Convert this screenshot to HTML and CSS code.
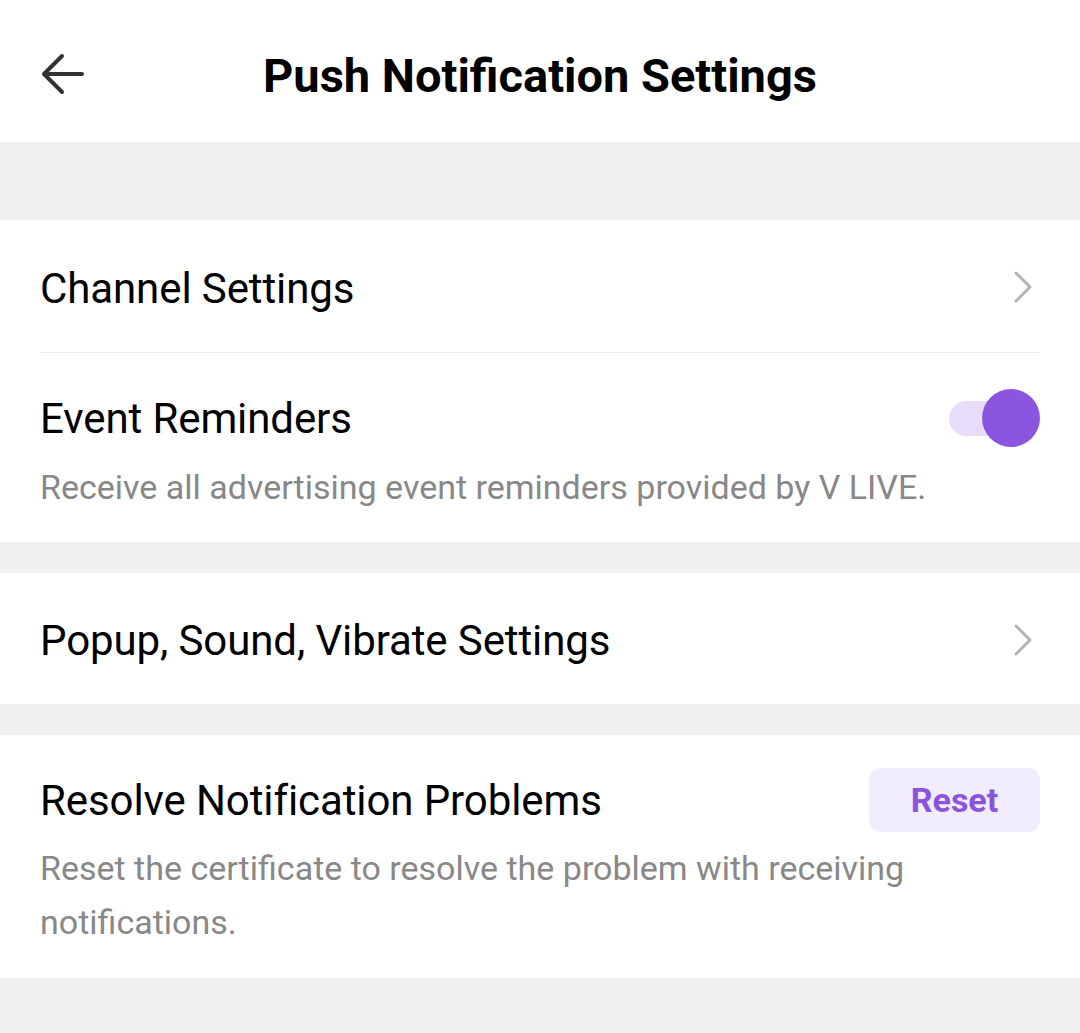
FILE: index.html
```html
<!DOCTYPE html>
<html>
<head>
<meta charset="utf-8">
<link rel="stylesheet" href="styles.css">
</head>
<body>
<div class="page">
  <header class="header">
    <button class="back" aria-label="Back">
      <svg width="48" height="48" viewBox="0 0 48 48"><path d="M43 24H5M23 6L5 24l18 18" fill="none" stroke="#333" stroke-width="4" stroke-linecap="round" stroke-linejoin="round"/></svg>
    </button>
    <h1 class="title">Push Notification Settings</h1>
  </header>
  <div class="gap gap-top"></div>
  <section class="group">
    <div class="row row-link">
      <span class="label">Channel Settings</span>
      <svg class="chev" width="20" height="32" viewBox="0 0 20 32"><path d="M3 2l14 14L3 30" fill="none" stroke="#b3b3b3" stroke-width="3" stroke-linecap="round" stroke-linejoin="round"/></svg>
    </div>
    <div class="divider"></div>
    <div class="row-block">
      <div class="row-head">
        <span class="label">Event Reminders</span>
        <span class="toggle"><span class="track"></span><span class="thumb"></span></span>
      </div>
      <p class="desc">Receive all advertising event reminders provided by V LIVE.</p>
    </div>
  </section>
  <div class="gap gap-small"></div>
  <section class="group">
    <div class="row row-link row-popup">
      <span class="label">Popup, Sound, Vibrate Settings</span>
      <svg class="chev" width="20" height="32" viewBox="0 0 20 32"><path d="M3 2l14 14L3 30" fill="none" stroke="#b3b3b3" stroke-width="3" stroke-linecap="round" stroke-linejoin="round"/></svg>
    </div>
  </section>
  <div class="gap gap-small"></div>
  <section class="group">
    <div class="row-block resolve">
      <div class="row-head">
        <span class="label">Resolve Notification Problems</span>
        <button class="reset">Reset</button>
      </div>
      <p class="desc">Reset the certificate to resolve the problem with receiving notifications.</p>
    </div>
  </section>
  <div class="gap gap-bottom"></div>
</div>
</body>
</html>
```

FILE: styles.css
```css
html, body {
  margin: 0;
  padding: 0;
  background: #f0f0f2;
}
body {
  font-family: Roboto, "Noto Sans", "Liberation Sans", sans-serif;
  color: #000;
}
.page {
  width: 1080px;
  height: 1033px;
  overflow: hidden;
  display: flex;
  flex-direction: column;
}
.header {
  height: 142px;
  background: #fff;
  position: relative;
  display: flex;
  align-items: center;
  justify-content: center;
  flex: none;
}
.back {
  position: absolute;
  left: 39px;
  top: 50px;
  width: 48px;
  height: 48px;
  padding: 0;
  border: 0;
  background: none;
  display: flex;
}
.title {
  margin: 8px 0 0 0;
  font-size: 47px;
  font-weight: 700;
  line-height: 1;
  color: #000;
}
.gap { background: #f0f0f2; flex: none; }
.gap-top { height: 78px; }
.gap-small { height: 31px; }
.gap-bottom { flex: 1; }
.group {
  background: #fff;
  padding: 0 40px;
  flex: none;
}
.row {
  height: 132px;
  display: flex;
  align-items: center;
  justify-content: space-between;
}
.row-popup { height: 131px; }
.label {
  font-size: 42px;
  line-height: 1;
  color: #000;
  letter-spacing: -0.1px;
}
.row .label { margin-top: 5px; }
.row-head .label { margin-top: 2px; }
.chev { margin-right: 7px; margin-top: 2px; }
.divider {
  height: 1px;
  background: #eaeaea;
}
.row-block {
  padding-top: 33px;
  padding-bottom: 28px;
}
.row-head {
  display: flex;
  align-items: center;
  justify-content: space-between;
  height: 64px;
}
.desc {
  margin: 10px 0 0 0;
  font-size: 34px;
  line-height: 54px;
  color: #888;
}
.toggle {
  position: relative;
  width: 91px;
  height: 58px;
  display: block;
}
.track {
  position: absolute;
  left: 0;
  top: 12px;
  width: 80px;
  height: 35px;
  border-radius: 18px;
  background: #e7ddf9;
}
.thumb {
  position: absolute;
  right: 0;
  top: 0;
  width: 58px;
  height: 58px;
  border-radius: 50%;
  background: #8c55e0;
}
.resolve { padding-top: 33px; padding-bottom: 29px; }
.resolve .desc { margin-top: 9px; }
.reset {
  width: 171px;
  height: 64px;
  border: 0;
  border-radius: 12px;
  background: #f1ecfb;
  color: #8a55db;
  font-family: Roboto, "Noto Sans", sans-serif;
  font-weight: 700;
  font-size: 34px;
  padding: 0;
}
```
